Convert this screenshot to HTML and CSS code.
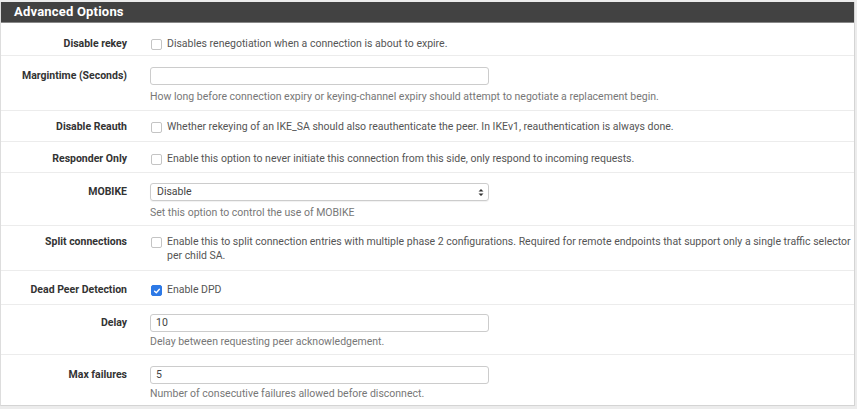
FILE: index.html
```html
<!DOCTYPE html>
<html>
<head>
<meta charset="utf-8">
<link rel="stylesheet" href="styles.css">
</head>
<body>
<div class="panel">
  <div class="panel-heading">Advanced Options</div>
  <div class="panel-body">
    <div class="row row-first">
      <div class="label">Disable rekey</div>
      <div class="content"><label class="check"><span class="box"></span>Disables renegotiation when a connection is about to expire.</label></div>
    </div>
    <div class="row row-input">
      <div class="label">Margintime (Seconds)</div>
      <div class="content"><div class="input"></div><div class="help">How long before connection expiry or keying-channel expiry should attempt to negotiate a replacement begin.</div></div>
    </div>
    <div class="row">
      <div class="label">Disable Reauth</div>
      <div class="content"><label class="check"><span class="box"></span>Whether rekeying of an IKE_SA should also reauthenticate the peer. In IKEv1, reauthentication is always done.</label></div>
    </div>
    <div class="row row-resp">
      <div class="label">Responder Only</div>
      <div class="content"><label class="check"><span class="box"></span>Enable this option to never initiate this connection from this side, only respond to incoming requests.</label></div>
    </div>
    <div class="row row-input row-select">
      <div class="label">MOBIKE</div>
      <div class="content"><div class="input select"><span>Disable</span><svg class="arrows" width="6" height="9" viewBox="0 0 6 9"><path d="M0.5 3.5 L3 1 L5.5 3.5 Z M0.5 5.5 L3 8 L5.5 5.5 Z" fill="#333"/></svg></div><div class="help">Set this option to control the use of MOBIKE</div></div>
    </div>
    <div class="row">
      <div class="label">Split connections</div>
      <div class="content"><label class="check"><span class="box"></span><span class="wraptext">Enable this to split connection entries with multiple phase 2 configurations. Required for remote endpoints that support only a single traffic selector per child SA.</span></label></div>
    </div>
    <div class="row row-dpd">
      <div class="label">Dead Peer Detection</div>
      <div class="content"><label class="check"><span class="box checked"><svg width="8" height="8" viewBox="0 0 8 8"><path d="M1.6 4.2 L3.3 5.8 L6.4 2.2" fill="none" stroke="#fff" stroke-width="1.4" stroke-linecap="round" stroke-linejoin="round"/></svg></span>Enable DPD</label></div>
    </div>
    <div class="row row-input row-delay">
      <div class="label">Delay</div>
      <div class="content"><div class="input"><span>10</span></div><div class="help">Delay between requesting peer acknowledgement.</div></div>
    </div>
    <div class="row row-input row-last">
      <div class="label">Max failures</div>
      <div class="content"><div class="input"><span>5</span></div><div class="help">Number of consecutive failures allowed before disconnect.</div></div>
    </div>
  </div>
</div>
</body>
</html>
```
FILE: styles.css
```css
html, body {
  margin: 0;
  padding: 0;
}
body {
  background: #ececec;
  font-family: Roboto, "Liberation Sans", Arial, sans-serif;
  font-size: 10.5px;
  line-height: 14px;
  color: #444;
  width: 857px;
  height: 409px;
  overflow: hidden;
}
.panel {
  margin: 2px 2px 0 0;
  background: #fff;
  border-left: 1px solid #ddd;
  border-right: 1px solid #d4d4d4;
  border-bottom: 1px solid #d4d4d4;
}
.panel-heading {
  background: #424242;
  color: #fff;
  font-weight: bold;
  font-size: 13px;
  line-height: 20px;
  padding-left: 13px;
  border-bottom: 1px solid #888;
  letter-spacing: 0.2px;
}
.row {
  display: flex;
  padding: 9px 0 7px;
  border-bottom: 1px solid #ececec;
}
.row-first {
  padding: 14px 0 4px;
}
.row-resp {
  padding: 10px 0 6px;
}
.row-input {
  padding: 11px 0 6px;
}
.row-select {
  padding: 10px 0 5px;
}
.row-dpd {
  padding: 12px 0 7px;
}
.row-delay {
  padding: 9px 0 5px;
}
.row-last {
  padding: 11px 0 4px;
  border-bottom: none;
}
.label {
  width: 126px;
  flex: none;
  text-align: right;
  font-weight: bold;
  color: #333;
}
.row-input .label {
  padding-top: 2px;
}
.content {
  margin-left: 23px;
  flex: 1;
  padding-right: 0;
  color: #555;
}
.check {
  display: flex;
  align-items: flex-start;
}
.box {
  flex: none;
  width: 9px;
  height: 9px;
  border: 1px solid #c4c4c4;
  border-radius: 2px;
  margin: 2px 5px 0 1px;
  background: #fff;
  display: flex;
  align-items: center;
  justify-content: center;
}
.box.checked {
  background: #2d79e6;
  border-color: #2d79e6;
}
.input {
  width: 337px;
  height: 16px;
  border: 1px solid #ccc;
  border-radius: 3px;
  display: flex;
  align-items: center;
  color: #444;
}
.input span {
  margin-left: 5px;
}
.select {
  justify-content: space-between;
  box-shadow: 0 1px 1px rgba(0,0,0,0.06);
}
.select span {
  margin-left: 6px;
}
.arrows {
  margin-right: 4px;
}
.help {
  color: #777;
  margin-top: 5px;
}
.row-delay .help,
.row-last .help {
  margin-top: 3px;
}
```
